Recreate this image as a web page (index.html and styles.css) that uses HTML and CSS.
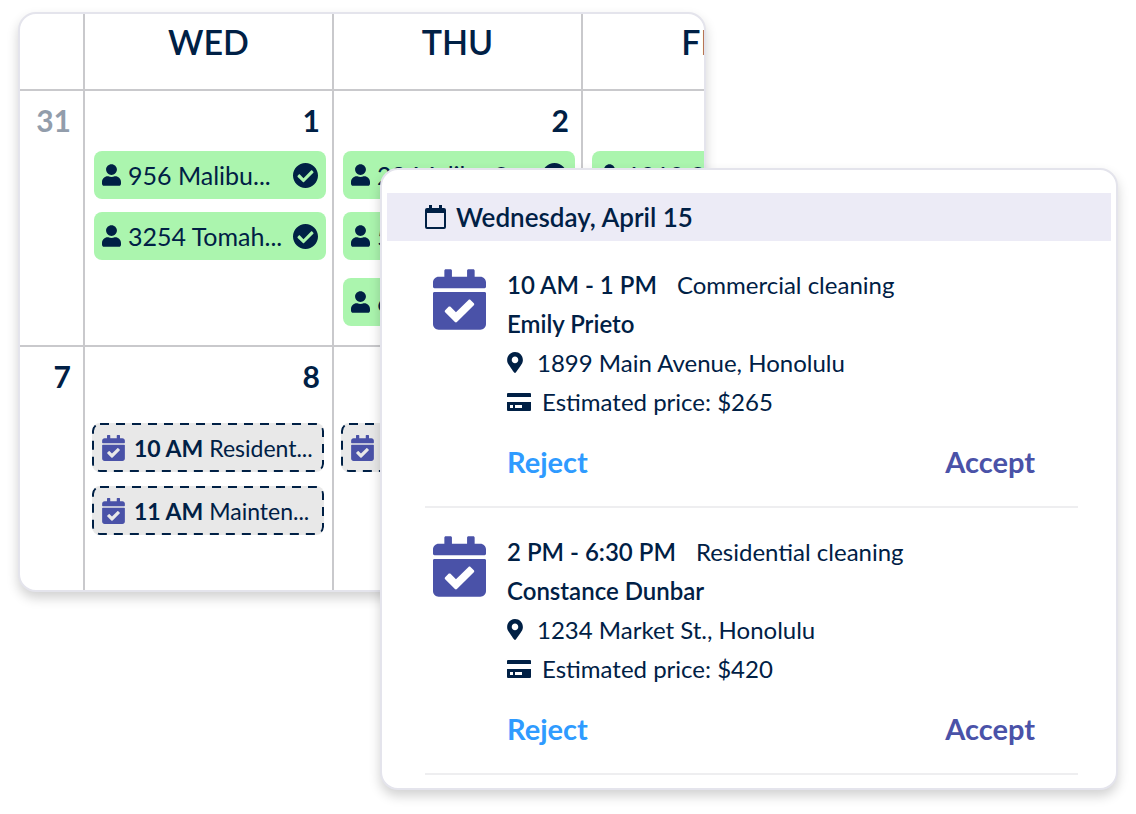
FILE: index.html
```html
<!DOCTYPE html>
<html lang="en">

<head>
  <meta charset="UTF-8">
  <meta name="viewport" content="width=device-width, initial-scale=1">
  <title>Booking calendar</title>
  <link rel="stylesheet" href="styles.css">
</head>

<body>
  <!-- Shared icons -->
  <svg class="sprite" aria-hidden="true">
    <symbol id="calendar-check" viewBox="0 0 448 512">
      <path d="M436 160H12c-6.627 0-12-5.373-12-12v-36c0-26.51 21.49-48 48-48h48V12c0-6.627 5.373-12 12-12h40c6.627 0 12 5.373 12 12v52h128V12c0-6.627 5.373-12 12-12h40c6.627 0 12 5.373 12 12v52h48c26.51 0 48 21.49 48 48v36c0 6.627-5.373 12-12 12zM12 192h424c6.627 0 12 5.373 12 12v260c0 26.51-21.49 48-48 48H48c-26.51 0-48-21.49-48-48V204c0-6.627 5.373-12 12-12zm333.296 95.947l-28.169-28.398c-4.667-4.705-12.265-4.736-16.97-.068L194.12 364.665l-45.98-46.352c-4.667-4.705-12.266-4.736-16.971-.068l-28.397 28.17c-4.705 4.667-4.736 12.265-.068 16.97l82.601 83.269c4.667 4.705 12.265 4.736 16.97.068l142.953-141.805c4.705-4.667 4.736-12.265.068-16.97z"/>
    </symbol>
    <symbol id="user" viewBox="0 0 448 512">
      <path d="M224 256c70.7 0 128-57.3 128-128S294.7 0 224 0 96 57.3 96 128s57.3 128 128 128zm89.6 32h-16.7c-22.2 10.2-46.9 16-72.9 16s-50.6-5.8-72.9-16h-16.7C60.2 288 0 348.2 0 422.4V464c0 26.5 21.5 48 48 48h352c26.5 0 48-21.5 48-48v-41.6c0-74.2-60.2-134.4-134.4-134.4z"/>
    </symbol>
    <symbol id="check-circle" viewBox="8 8 496 496">
      <path d="M504 256c0 136.967-111.033 248-248 248S8 392.967 8 256 119.033 8 256 8s248 111.033 248 248zM227.314 387.314l184-184c6.248-6.248 6.248-16.379 0-22.627l-22.627-22.627c-6.248-6.249-16.379-6.249-22.628 0L216 308.118l-70.059-70.059c-6.248-6.248-16.379-6.248-22.628 0l-22.627 22.627c-6.248 6.248-6.248 16.379 0 22.627l104 104c6.249 6.249 16.379 6.249 22.628.001z"/>
    </symbol>
    <symbol id="pin" viewBox="0 0 384 512">
      <path d="M172.268 501.67C26.97 291.031 0 269.413 0 192 0 85.961 85.961 0 192 0s192 85.961 192 192c0 77.413-26.97 99.031-172.268 309.67-9.535 13.774-29.93 13.773-39.464 0zM192 272c44.183 0 80-35.817 80-80s-35.817-80-80-80-80 35.817-80 80 35.817 80 80 80z"/>
    </symbol>
    <symbol id="card" viewBox="0 0 24 18">
      <path fill-rule="evenodd" d="M1 0h22a1 1 0 0 1 1 1v3H0V1a1 1 0 0 1 1-1zM0 9h24v8a1 1 0 0 1-1 1H1a1 1 0 0 1-1-1zM3 12v3h3v-3zM8 12v3h7v-3z"/>
    </symbol>
    <symbol id="calendar" viewBox="0 0 21 24">
      <path fill-rule="evenodd" d="M4 0h3v3h7V0h3v3h2a2 2 0 0 1 2 2v17a2 2 0 0 1-2 2H2a2 2 0 0 1-2-2V5a2 2 0 0 1 2-2h2zM2 8v14h17V8z"/>
    </symbol>
  </svg>

  <main class="scene">
    <section class="panel calendar">
      <table class="month">
        <colgroup>
          <col class="col-narrow">
          <col>
          <col>
          <col>
        </colgroup>
        <thead>
          <tr>
            <th></th>
            <th>WED</th>
            <th>THU</th>
            <th>FRI</th>
          </tr>
        </thead>
        <tbody>
          <tr>
            <td><div class="day muted">31</div></td>
            <td>
              <div class="day">1</div>
              <div class="event"><svg class="icon-user"><use href="#user"/></svg><span>956 Malibu...</span><svg class="icon-done"><use href="#check-circle"/></svg></div>
              <div class="event"><svg class="icon-user"><use href="#user"/></svg><span>3254 Tomah...</span><svg class="icon-done"><use href="#check-circle"/></svg></div>
            </td>
            <td>
              <div class="day">2</div>
              <div class="event"><svg class="icon-user"><use href="#user"/></svg><span>28 Malibu S...</span><svg class="icon-done"><use href="#check-circle"/></svg></div>
              <div class="event"><svg class="icon-user"><use href="#user"/></svg><span>5</span></div>
              <div class="event last"><svg class="icon-user"><use href="#user"/></svg><span>6</span></div>
            </td>
            <td>
              <div class="event only"><svg class="icon-user"><use href="#user"/></svg><span>1010 S...</span></div>
            </td>
          </tr>
          <tr>
            <td><div class="day">7</div></td>
            <td>
              <div class="day tall">8</div>
              <div class="request"><svg class="icon-request"><use href="#calendar-check"/></svg><b>10 AM</b> <span>Resident...</span></div>
              <div class="request"><svg class="icon-request"><use href="#calendar-check"/></svg><b>11 AM</b> <span>Mainten...</span></div>
            </td>
            <td>
              <div class="day tall"></div>
              <div class="request"><svg class="icon-request"><use href="#calendar-check"/></svg></div>
            </td>
            <td></td>
          </tr>
        </tbody>
      </table>
    </section>

    <section class="panel bookings">
      <h2 class="date"><svg class="icon-date"><use href="#calendar"/></svg>Wednesday, April 15</h2>

      <article class="booking">
        <svg class="icon-booking"><use href="#calendar-check"/></svg>
        <div class="details">
          <p><strong>10 AM - 1 PM</strong><span class="service">Commercial cleaning</span></p>
          <p><strong>Emily Prieto</strong></p>
          <p><svg class="icon-pin"><use href="#pin"/></svg>1899 Main Avenue, Honolulu</p>
          <p><svg class="icon-card"><use href="#card"/></svg>Estimated price: $265</p>
          <div class="actions">
            <button class="btn reject">Reject</button>
            <button class="btn accept">Accept</button>
          </div>
        </div>
      </article>

      <article class="booking">
        <svg class="icon-booking"><use href="#calendar-check"/></svg>
        <div class="details">
          <p><strong>2 PM - 6:30 PM</strong><span class="service">Residential cleaning</span></p>
          <p><strong>Constance Dunbar</strong></p>
          <p><svg class="icon-pin"><use href="#pin"/></svg>1234 Market St., Honolulu</p>
          <p><svg class="icon-card"><use href="#card"/></svg>Estimated price: $420</p>
          <div class="actions">
            <button class="btn reject">Reject</button>
            <button class="btn accept">Accept</button>
          </div>
        </div>
      </article>
    </section>
  </main>
</body>

</html>
```
FILE: styles.css
```css
* {
  box-sizing: border-box;
}

body {
  font-family: Lato, sans-serif;
  font-size: 24px;
  color: #002045;
  background-color: #fff;
  margin: 0;
}

svg {
  fill: currentColor;
  flex-shrink: 0;
}

.sprite {
  display: none;
}

/* The two panels share one grid so that they overlap */
.scene {
  display: grid;
  grid-template-columns: 362fr 326fr 412fr;
  grid-template-rows: 156px 424px auto;
  padding: 12px 18px 24px;
}

.panel {
  background-color: #fff;
  border: 2px solid #e4e4ec;
  border-radius: 18px;
  box-shadow: 0 6px 12px rgba(0, 0, 0, 0.18);
  overflow: hidden;
}

.calendar {
  grid-column: 1 / 3;
  grid-row: 1 / 3;
}

.bookings {
  grid-column: 2 / 4;
  grid-row: 2 / 4;
  z-index: 1;
  padding: 23px 5px 13px;
}

/* Calendar */
.month {
  table-layout: fixed;
  width: 812px;
  border-spacing: 0;
}

.col-narrow {
  width: 65px;
}

.month th,
.month td {
  border-right: 2px solid #c9c9cc;
  border-bottom: 2px solid #c9c9cc;
  padding: 0;
  vertical-align: top;
}

.month th {
  height: 77px;
  padding-top: 8px;
  font-size: 34px;
  font-weight: 600;
  line-height: 40px;
}

.month td {
  height: 256px;
  padding: 0 6px 0 9px;
}

.month tbody tr:last-child td {
  height: 243px;
  padding: 0 8px 0 7px;
  border-bottom: none;
}

.month tbody tr td:first-child {
  padding: 0 6px;
}

.day {
  height: 60px;
  padding-right: 6px;
  font-size: 30px;
  font-weight: 700;
  line-height: 58px;
  text-align: right;
}

.tall {
  height: 76px;
  padding-right: 4px;
}

.muted {
  color: #929dab;
}

.event {
  display: flex;
  align-items: center;
  gap: 7px;
  height: 48px;
  margin-bottom: 13px;
  padding: 0 8px;
  background-color: #abf5ae;
  border-radius: 8px;
  font-size: 25px;
  white-space: nowrap;
}

.last {
  margin-top: 18px;
}

.only {
  margin-top: 60px;
}

/* Long dashes, drawn in svg because the length of border dashes is fixed */
.request {
  display: flex;
  align-items: center;
  gap: 6px;
  height: 49px;
  margin-bottom: 14px;
  padding: 0 10px;
  background: #e8e8e8 url("data:image/svg+xml,%3Csvg xmlns='http://www.w3.org/2000/svg' width='100%25' height='100%25'%3E%3Crect x='1' y='1' rx='7' style='width:calc(100%25 - 2px);height:calc(100%25 - 2px)' fill='none' stroke='%23002045' stroke-width='2' stroke-dasharray='9 7'/%3E%3C/svg%3E") no-repeat;
  border-radius: 8px;
  font-size: 23px;
  white-space: nowrap;
}

.request b {
  font-weight: 700;
}

.icon-user {
  width: 19px;
  height: 22px;
}

.icon-done {
  width: 25px;
  height: 25px;
  margin-left: auto;
}

.icon-request {
  width: 23px;
  height: 26px;
  margin-right: 3px;
  color: #4a52a8;
}

/* Bookings */
.date {
  display: flex;
  align-items: center;
  gap: 10px;
  height: 48px;
  margin: 0;
  padding-left: 38px;
  background-color: #ecebf6;
  font-size: 26px;
  font-weight: 600;
}

.icon-date {
  width: 21px;
  height: 24px;
}

.booking {
  display: flex;
  gap: 21px;
  margin: 0 33px 0 38px;
  padding: 24px 43px 26px 8px;
  border-bottom: 2px solid #eeeef0;
}

.icon-booking {
  width: 53px;
  height: 61px;
  margin-top: 4px;
  color: #4a52a8;
}

.details {
  flex: 1;
}

.details p {
  display: flex;
  align-items: center;
  height: 39px;
  margin: 0;
  white-space: nowrap;
}

.details strong {
  font-weight: 600;
}

.service {
  margin-left: 20px;
}

.icon-pin {
  width: 16px;
  height: 21px;
  margin-right: 14px;
}

.icon-card {
  width: 24px;
  height: 18px;
  margin-right: 11px;
}

.actions {
  display: flex;
  justify-content: space-between;
  margin-top: 23px;
}

.btn {
  padding: 0;
  border: none;
  background: none;
  font-family: inherit;
  font-size: 29px;
  font-weight: 700;
  line-height: 36px;
  cursor: pointer;
}

.reject {
  color: #2f9bff;
}

.accept {
  color: #4a52a8;
}
```
